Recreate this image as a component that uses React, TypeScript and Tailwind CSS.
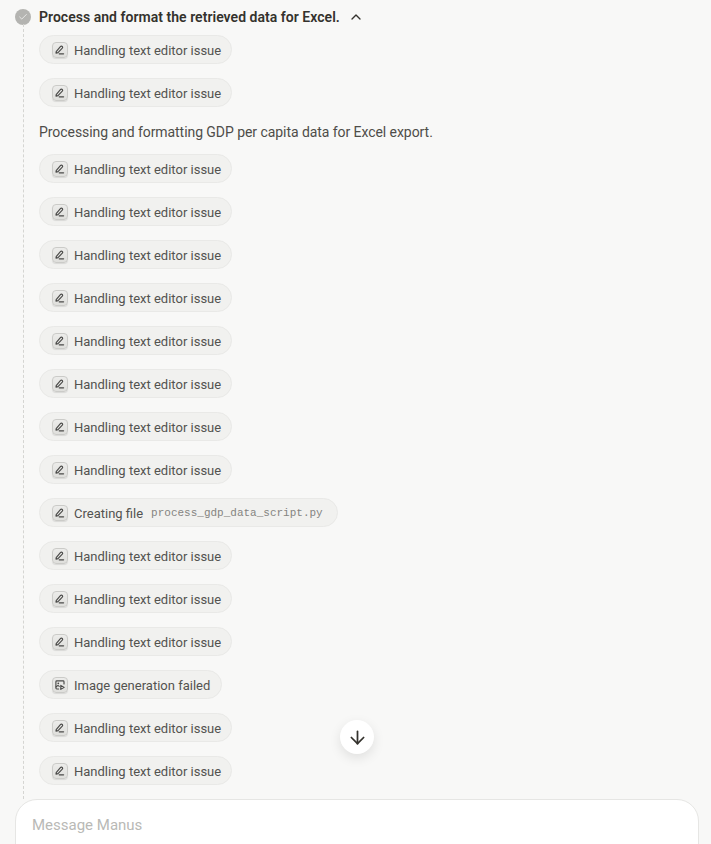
import { ArrowDown, Check, ChevronUp } from "lucide-react";

const font = "font-['Roboto','Noto_Sans',sans-serif]";

function PenIcon() {
  return (
    <svg width="14" height="14" viewBox="0 0 14 14" fill="none" className="text-[#4a4a48]">
      <path d="M3.2 8.6 7.4 3.6c.5-.6 1.5-.6 2 0 .4.5.4 1.1-.1 1.6L5 9.6l-2 .5z" stroke="currentColor" strokeWidth="1.15" strokeLinejoin="round" />
      <path d="M6.2 10.8h4.4" stroke="currentColor" strokeWidth="1.15" strokeLinecap="round" />
    </svg>
  );
}

function ImageIcon() {
  return (
    <svg width="14" height="14" viewBox="0 0 14 14" fill="none" className="text-[#4a4a48]">
      <path d="M5.6 11H3.8a.9.9 0 0 1-.9-.9V3.8a.9.9 0 0 1 .9-.9h6.3a.9.9 0 0 1 .9.9V6" stroke="currentColor" strokeWidth="1.15" strokeLinecap="round" />
      <circle cx="5.3" cy="5.3" r="0.9" fill="currentColor" />
      <path d="M3.2 8.8 5 7.4 6.2 8.4" stroke="currentColor" strokeWidth="1.1" strokeLinecap="round" />
      <path d="M7.8 7.4v4l3.4-2z" stroke="currentColor" strokeWidth="1.1" strokeLinejoin="round" />
    </svg>
  );
}

function Pill({ label, file, image }: { label: string; file?: string; image?: boolean }) {
  return (
    <div className={`flex h-[29px] w-fit items-center gap-[6px] rounded-full border border-[#e9e9e7] bg-[#f1f1ef] pl-[12px] ${file ? "pr-[14px]" : image ? "pr-[11px]" : "pr-[10px]"}`}>
      <span className="flex h-[16px] w-[16px] shrink-0 items-center justify-center rounded-[4px] border border-[#cbcbc8] bg-gradient-to-b from-[#ececea] to-[#dfdfdc] shadow-[0_1px_1px_rgba(0,0,0,0.1)]">
        {image ? <ImageIcon /> : <PenIcon />}
      </span>
      <span className="mt-[2px] text-[13px] leading-[20px] text-[#535350]">{label}</span>
      {file && <code className="ml-[2px] mt-[2px] font-['Liberation_Mono',monospace] text-[11px] text-[#858481]">{file}</code>}
    </div>
  );
}

const EDIT = "Handling text editor issue";

export default function App() {
  return (
    <div className={`relative flex h-[844px] w-[711px] flex-col overflow-hidden bg-[#f8f8f7] ${font}`}>
      <div className="relative min-h-0 flex-1 pl-[15px] pt-[8px]">
        {/* timeline */}
        <div className="absolute bottom-0 left-[23px] top-[24px] border-l border-dashed border-[#d5d5d2]" />

        <div className="flex h-[17px] items-center gap-[8px]">
          <span className="flex h-[16px] w-[16px] items-center justify-center rounded-full bg-[#b4b4b1]">
            <Check size={10} strokeWidth={2} className="text-[#f1f1ef]" />
          </span>
          <span className="text-[14px] font-semibold leading-[20px] tracking-[0.03px] text-[#34322d]">Process and format the retrieved data for Excel.</span>
          <ChevronUp size={16} strokeWidth={2} className="text-[#34322d]" />
        </div>

        <div className="mt-[10px] flex flex-col gap-[14px] pl-[24px]">
          <Pill label={EDIT} />
          <Pill label={EDIT} />
          <p className="h-[19px] pt-[1px] text-[14px] leading-[20px] tracking-[-0.06px] text-[#4e4d49]">Processing and formatting GDP per capita data for Excel export.</p>
          <Pill label={EDIT} />
          <Pill label={EDIT} />
          <Pill label={EDIT} />
          <Pill label={EDIT} />
          <Pill label={EDIT} />
          <Pill label={EDIT} />
          <Pill label={EDIT} />
          <Pill label={EDIT} />
          <Pill label="Creating file" file="process_gdp_data_script.py" />
          <Pill label={EDIT} />
          <Pill label={EDIT} />
          <Pill label={EDIT} />
          <Pill label="Image generation failed" image />
          <Pill label={EDIT} />
          <Pill label={EDIT} />
        </div>
      </div>

      <button className="absolute left-[340px] top-[720px] flex h-[34px] w-[34px] items-center justify-center rounded-full bg-white shadow-[0_4px_12px_rgba(0,0,0,0.1)]">
        <ArrowDown size={21} strokeWidth={2} className="text-[#34322d]" />
      </button>

      <div className="h-[45px] shrink-0 pl-[15px] pr-[12px]">
        <div className="h-[60px] rounded-t-[22px] border border-[#e6e6e4] bg-white pl-[16px] pt-[13px]">
          <span className="text-[15px] leading-[22px] text-[#b9b9b6]">Message Manus</span>
        </div>
      </div>
    </div>
  );
}
